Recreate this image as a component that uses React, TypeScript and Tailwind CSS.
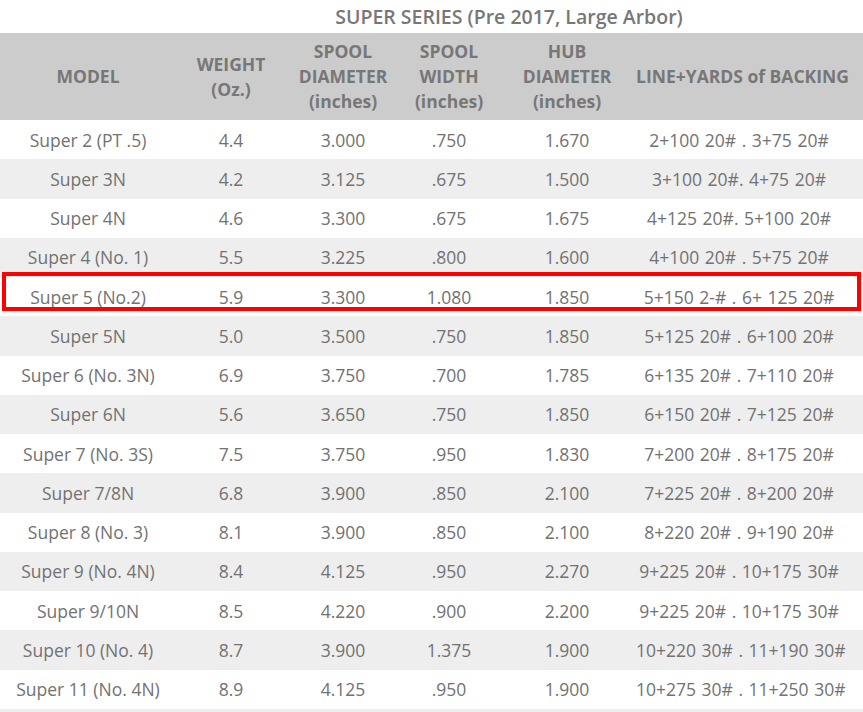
const rows: string[][] = [
  ["Super 2 (PT .5)", "4.4", "3.000", ".750", "1.670", "2+100 20# . 3+75 20#"],
  ["Super 3N", "4.2", "3.125", ".675", "1.500", "3+100 20#. 4+75 20#"],
  ["Super 4N", "4.6", "3.300", ".675", "1.675", "4+125 20#. 5+100 20#"],
  ["Super 4 (No. 1)", "5.5", "3.225", ".800", "1.600", "4+100 20# . 5+75 20#"],
  ["Super 5 (No.2)", "5.9", "3.300", "1.080", "1.850", "5+150 2-# . 6+ 125 20#"],
  ["Super 5N", "5.0", "3.500", ".750", "1.850", "5+125 20# . 6+100 20#"],
  ["Super 6 (No. 3N)", "6.9", "3.750", ".700", "1.785", "6+135 20# . 7+110 20#"],
  ["Super 6N", "5.6", "3.650", ".750", "1.850", "6+150 20# . 7+125 20#"],
  ["Super 7 (No. 3S)", "7.5", "3.750", ".950", "1.830", "7+200 20# . 8+175 20#"],
  ["Super 7/8N", "6.8", "3.900", ".850", "2.100", "7+225 20# . 8+200 20#"],
  ["Super 8 (No. 3)", "8.1", "3.900", ".850", "2.100", "8+220 20# . 9+190 20#"],
  ["Super 9 (No. 4N)", "8.4", "4.125", ".950", "2.270", "9+225 20# . 10+175 30#"],
  ["Super 9/10N", "8.5", "4.220", ".900", "2.200", "9+225 20# . 10+175 30#"],
  ["Super 10 (No. 4)", "8.7", "3.900", "1.375", "1.900", "10+220 30# . 11+190 30#"],
  ["Super 11 (No. 4N)", "8.9", "4.125", ".950", "1.900", "10+275 30# . 11+250 30#"],
];

const cols = "grid grid-cols-[176px_110px_114px_98px_138px_1fr]";

export default function App() {
  return (
    <div
      className="w-[863px] bg-white text-[#707070]"
      style={{ fontFamily: '"Open Sans", sans-serif' }}
    >
      <div className={cols + " h-[33px] items-center"}>
        <div />
        <div className="col-span-5 pr-[21px] pt-[1px] text-center text-[19.5px] font-semibold text-[#777777] whitespace-nowrap">
          SUPER SERIES (Pre 2017, Large Arbor)
        </div>
      </div>

      <div className={cols + " h-[87px] items-center bg-[#cccccc] text-[17.5px] font-bold leading-[25px] text-[#777777] text-center"}>
        <div>MODEL</div>
        <div>WEIGHT<br />(Oz.)</div>
        <div>SPOOL<br />DIAMETER<br />(inches)</div>
        <div>SPOOL<br />WIDTH<br />(inches)</div>
        <div>HUB<br />DIAMETER<br />(inches)</div>
        <div className="pr-[21px] whitespace-nowrap">LINE+YARDS of BACKING</div>
      </div>

      {rows.map((r, i) => (
        <div
          key={r[0]}
          className={
            cols +
            " relative h-[39.25px] items-center text-center text-[17.5px] text-[#727272] " +
            (i % 2 === 1 ? "bg-[#eeeeee]" : "bg-white")
          }
        >
          {r.map((c, j) => (
            <div
              key={j}
              className={j === 5 ? "pr-[21px] whitespace-nowrap [word-spacing:1px]" : "whitespace-nowrap"}
            >
              {c}
            </div>
          ))}
          {i === 4 && (
            <div className="absolute left-[2px] top-[-5px] h-[39px] w-[859px] border-4 border-[#ff0000]" />
          )}
        </div>
      ))}
      <div className="h-[20px] bg-[#eeeeee]" />
    </div>
  );
}
